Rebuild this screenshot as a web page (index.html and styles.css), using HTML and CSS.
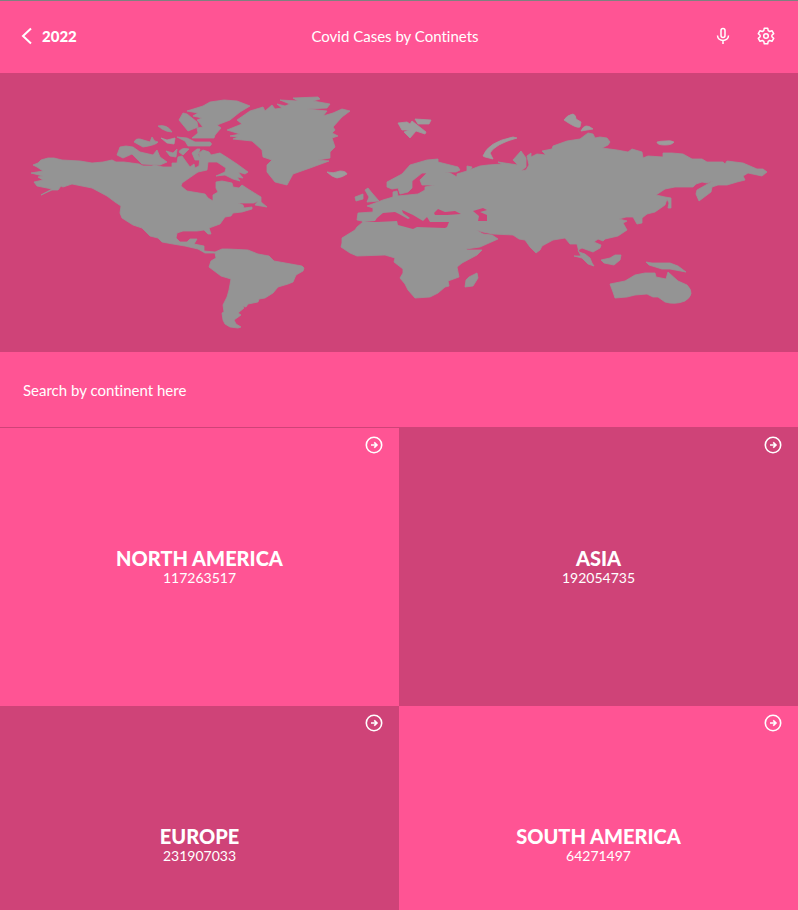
FILE: index.html
```html
<!DOCTYPE html>
<html lang="en">
<head>
<meta charset="utf-8">
<meta name="viewport" content="width=device-width, initial-scale=1">
<title>Covid Cases by Continets</title>
<link rel="stylesheet" href="styles.css">
</head>
<body>
<header class="topbar">
  <a class="back" href="#">
    <svg class="back-icon" viewBox="0 0 12 18" aria-hidden="true"><path d="M10 1.500 2 9l8 7.500"/></svg>
    <span>2022</span>
  </a>
  <h1 class="title">Covid Cases by Continets</h1>
  <div class="actions">
    <button class="icon-button" type="button" aria-label="Voice search">
      <svg class="icon" viewBox="0 0 18 18" aria-hidden="true"><rect x="7" y="1.5" width="4" height="9" rx="2"/><path d="M3.5 8.5c0 6.5 11 6.5 11 0M9 13.5V17"/></svg>
    </button>
    <button class="icon-button" type="button" aria-label="Settings">
      <svg class="icon" viewBox="0 0 18 18" aria-hidden="true"><path d="M7.3 1.2h3.4l.5 2.4 1.5.9 2.3-.8 1.7 2.9L14.9 8.2v1.6l1.8 1.6-1.7 2.9-2.3-.8-1.5.9-.5 2.400H7.300l-.5-2.400-1.500-.9-2.300.8-1.700-2.900 1.800-1.600V8.200L1.300 6.600 3 3.700l2.300.8 1.500-.9z"/><circle cx="9" cy="9" r="2.3"/></svg>
    </button>
  </div>
</header>
<main>
  <section class="map">
    <svg class="world" viewBox="0 73 798 279" role="img" aria-label="World map">
      <g class="land">
        <!-- the Americas -->
        <path d="M33 165 38 163 41 160 48 158 54 158 62 160 80 161 92 163 103 162 112 160 116 162 124 162 139 164 143 166 152 166 154 165 163 167 172 167 172 163 177 163 178 157 182 156 187 163 190 167 194 164 195 168 199 166 200 157 199 153 203 150 209 152 211 155 220 153 228 158 237 164 248 172 245 174 238 172 243 178 237 177 240 181 233 179 225 175 216 176 225 172 226 168 217 162 208 162 207 170 198 172 195 174 182 183 181 186 187 191 205 194 208 198 213 201 213 195 218 192 216 188 216 182 222 181 232 183 233 187 239 188 242 185 248 189 261 197 261 202 267 207 255 205 258 201 254 203 238 203 243 205 244 208 252 207 252 209 242 212 233 213 231 216 225 217 220 224 209 228 211 234 208 234 204 230 197 231 183 231 177 233 176 238 180 242 187 242 190 239 197 239 194 244 204 246 204 251 215 252 222 249 228 249 248 250 258 254 269 256 274 261 302 266 304 268 303 271 296 275 293 282 288 284 278 287 273 293 265 298 259 299 258 302 248 304 246 307 242 306 244 308 238 313 241 315 234 320 236 324 241 327 238 328 230 327 225 324 223 320 222 313 224 312 223 305 227 297 229 290 231 279 221 276 209 267 211 261 216 258 215 253 205 253 198 249 185 246 173 244 162 242 158 238 150 236 142 228 133 225 122 218 120 213 121 206 115 202 107 196 92 188 72 184 63 187 61 186 58 190 52 190 41 195 52 189 37 186 34 182 43 180 38 177 43 176 31 173 43 171 37 167Z"/>
        <!-- Greenland and the Arctic islands -->
        <path d="M227 130 242 124 237 120 250 111 263 107 265 111 272 105 275 109 282 108 277 104 285 106 290 104 280 100 298 101 293 98 318 97 320 99 313 101 330 104 327 108 307 109 327 111 323 116 333 113 342 109 350 111 342 117 333 127 335 130 332 133 338 136 332 138 335 147 330 152 330 158 318 160 329 161 310 168 293 174 287 185 275 182 267 172 267 165 272 160 263 157 262 150 252 141 233 139 238 137 230 136 240 134Z"/>
        <path d="M187 111 203 106 210 102 224 100 237 101 250 106 240 112 230 120 217 125 221 128 215 135 214 138 192 138 198 133 197 128 203 127 197 120 202 118 193 116 198 113Z"/>
        <path d="M179 120 183 113 187 114 197 122 198 127 188 131Z"/>
        <path d="M177 137 187 138 195 142 210 142Q213 144 210 146L188 146 185 141Z"/>
        <path d="M158 126Q167 124 172 132 167 132 162 129Z"/>
        <path d="M134 142Q136 138 140 139L150 142 152 137Q154 142 158 142 156 145 143 147Z"/>
        <path class="pale" d="M161 138 167 140 175 138 174 144 167 143Z"/>
        <path d="M117 155 120 147 126 146 133 147 140 152 153 155 157 150 160 157 167 162 160 165 142 164 132 154 123 158Z"/>
        <path d="M166 151 173 153 177 149 176 157 170 156Z"/>
        <path d="M179 152Q181 147 189 149L183 155Z"/>
        <path d="M192 153 197 149 200 149 198 155 202 160 195 160Z"/>
        <path class="pale" d="M327 172Q333 174 340 171 346 171 347 174 343 177 337 178 332 177 327 172Z"/>
        <!-- Europe, Africa and Asia -->
        <path d="M358 213 357 220 362 221 363 222 357 227 355 230 342 238 342 243 341 247 350 253 357 256 385 255 395 258 394 262 403 269 403 273 400 278 405 284 408 290 415 298 430 297 438 293 445 287 449 286 448 281 459 277 457 267 462 263 477 255 482 250 467 250 466 249 480 247 498 239 492 235 483 234 476 230 483 232 493 234 513 235 519 239 525 240 530 247 536 253 540 250 542 246 553 240 565 238 570 244 577 244 579 252 585 254 590 258 592 263 594 266 588 264 582 258 574 256 581 256 578 250 582 248 593 252 600 248 601 245 594 242 598 239 603 241 605 239 618 236 627 230 623 223 627 221 619 219 626 217 633 217 637 224 642 223 642 218 647 214 655 212 665 205 667 199 669 203 668 208 671 208 671 198 665 197 656 195 665 189 675 187 693 187 696 184 702 182 707 183 713 181 697 190 696 194 699 201 711 192 712 187 718 185 727 185 737 182 745 180 743 176 748 173 762 176 767 172 763 169 757 169 743 163 727 161 725 164 723 162 707 162 702 159 692 159 683 154 672 153 663 153 663 157 648 156 643 158 642 152 632 149 628 152 617 150 602 148 608 145 610 142 607 138 600 137 595 138 593 134 588 133 580 139 567 141 553 146 552 149 542 151 546 155 537 154 531 157 531 153 527 156 529 165 526 170 521 171 526 167 526 158 521 151 513 160 518 165 498 162 502 164 488 165 480 166 472 169 470 171 472 167 467 166 467 171 457 174 457 177 450 173 445 172 456 172 460 170 458 167 438 162 438 159 427 160 410 165 402 174 387 182 387 187 392 189 398 188 400 194 408 192 412 188 412 181 422 173 427 173 420 180 422 185 435 185 425 187 425 190 418 194 398 196 397 191 393 192 393 197 383 200 378 202 367 206 373 208 373 212Z"/>
        <path class="pale" d="M398 123 407 122 410 124 412 121 426 132 425 134 416 131 410 138 404 132 409 130 402 130Z"/>
        <path class="pale" d="M415 119 431 120 429 124 418 124Z"/>
        <path class="pale" d="M483 156Q488 142 513 137L517 138Q495 144 490 153L493 159 485 157Z"/>
        <path class="pale" d="M564 120Q567 115 573 114 576 115 576 119L581 122 580 127Q577 129 564 120Z"/>
        <path class="pale" d="M581 131Q585 122 593 129Z"/>
        <path class="pale" d="M657 142Q661 141 665 141 671 140 674 142 672 145 665 145 657 145 657 142Z"/>
        <path d="M365 190 368 188 372 193 379 201 367 202 369 197Z"/>
        <path d="M355 197 363 194 363 199 356 201Z"/>
        <path d="M466 280 469 277 477 273 478 278 473 286 465 287Z"/>
        <!-- Oceania -->
        <path d="M601 260 610 258 615 255 621 255 620 260 614 265 604 263Z"/>
        <path d="M646 262 652 263 670 263 678 266 686 272 670 269 662 269 649 265Z"/>
        <path d="M610 284 625 281 635 275 645 273 655 273 656 277 666 279 668 272 678 281 687 285Q696 294 685 301 675 305 665 302L658 297 653 297 647 294 635 295 627 297 615 298 613 292Z"/>
      </g>
      <g class="sea">
        <path d="M364 222 375 221 377 218 383 213 395 212 399 214 408 219 410 218 403 213 402 210 413 215 423 221 427 217 430 222 449 222 447 227 445 228 417 227 413 229 398 225 397 221 377 222Z"/>
        <path d="M434 213 438 209 445 212 455 211 461 214 447 215 435 215Z"/>
        <path d="M473 211 483 208 487 210 480 212 487 215 487 221 478 221 479 216Z"/>
      </g>
    </svg>
  </section>
  <form class="search" role="search">
    <input class="search-input" type="text" placeholder="Search by continent here" aria-label="Search by continent here">
  </form>
  <section class="grid">
    <a class="card" href="#">
      <svg class="arrow" viewBox="0 0 18 18" aria-hidden="true"><circle cx="9" cy="9" r="7.7"/><path d="M6 9h5.500M9.200 6.300 12 9l-2.800 2.700"/></svg>
      <h2 class="name">NORTH AMERICA</h2>
      <p class="count">117263517</p>
    </a>
    <a class="card dark" href="#">
      <svg class="arrow" viewBox="0 0 18 18" aria-hidden="true"><circle cx="9" cy="9" r="7.7"/><path d="M6 9h5.500M9.200 6.300 12 9l-2.800 2.700"/></svg>
      <h2 class="name">ASIA</h2>
      <p class="count">192054735</p>
    </a>
    <a class="card dark" href="#">
      <svg class="arrow" viewBox="0 0 18 18" aria-hidden="true"><circle cx="9" cy="9" r="7.7"/><path d="M6 9h5.500M9.200 6.300 12 9l-2.800 2.700"/></svg>
      <h2 class="name">EUROPE</h2>
      <p class="count">231907033</p>
    </a>
    <a class="card" href="#">
      <svg class="arrow" viewBox="0 0 18 18" aria-hidden="true"><circle cx="9" cy="9" r="7.7"/><path d="M6 9h5.500M9.200 6.300 12 9l-2.800 2.700"/></svg>
      <h2 class="name">SOUTH AMERICA</h2>
      <p class="count">64271497</p>
    </a>
  </section>
</main>
</body>
</html>
```
FILE: styles.css
```css
:root {
  --pink: #ff5494;
  --dark: #cf4378;
}

* {
  box-sizing: border-box;
  margin: 0;
}

html {
  height: 100%;
}

body {
  height: 100%;
  overflow: hidden auto;
  scrollbar-width: none;
  border-top: 1px solid #808080;
  background: var(--pink);
  color: #fff;
  font-family: Lato, "Gill Sans", sans-serif;
  font-size: 15px;
  font-variant-ligatures: none;
  line-height: 20px;
}

a {
  color: inherit;
  text-decoration: none;
}

.topbar {
  display: grid;
  grid-template-columns: 1fr auto 1fr;
  align-items: center;
  height: 72px;
  padding: 0 23px 2px 21px;
}

.back {
  display: flex;
  align-items: center;
  gap: 9px;
  font-weight: 900;
}

.back-icon {
  width: 12px;
  height: 18px;
  fill: none;
  stroke: #fff;
  stroke-width: 2;
}

.title {
  padding-right: 6px;
  font-size: 15px;
  font-weight: 400;
}

.actions {
  display: flex;
  justify-content: flex-end;
  gap: 25px;
}

.icon-button {
  display: flex;
  padding: 0;
  border: 0;
  background: none;
  cursor: pointer;
}

.icon {
  width: 18px;
  height: 18px;
  fill: none;
  stroke: #fff;
  stroke-width: 1.5;
  stroke-linejoin: round;
}

.map {
  background: var(--dark);
}

.world {
  display: block;
  width: 100%;
}

.land {
  fill: #949494;
  stroke: #949494;
  stroke-width: 0.8;
  stroke-linejoin: round;
}

.pale {
  fill: #9c9c9c;
  stroke: #9c9c9c;
}

.sea {
  fill: var(--dark);
}

.search {
  border-bottom: 1px solid var(--dark);
}

.search-input {
  display: block;
  width: 100%;
  height: 75px;
  padding: 0 23px;
  border: 0;
  outline: 0;
  background: none;
  color: #fff;
  font: inherit;
  font-variant-ligatures: none;
}

.search-input::placeholder {
  color: #fff;
  opacity: 1;
}

.grid {
  display: grid;
  grid-template-columns: 1fr 1fr;
}

.card {
  position: relative;
  display: flex;
  flex-direction: column;
  align-items: center;
  justify-content: center;
  height: 278px;
  padding-top: 2px;
  background: var(--pink);
}

.dark {
  background: var(--dark);
}

.arrow {
  position: absolute;
  top: 8px;
  right: 16px;
  width: 18px;
  height: 18px;
  fill: none;
  stroke: #fff;
  stroke-width: 1.6;
}

.name {
  font-size: 20px;
  font-weight: 900;
}

.count {
  font-size: 14px;
}
```
